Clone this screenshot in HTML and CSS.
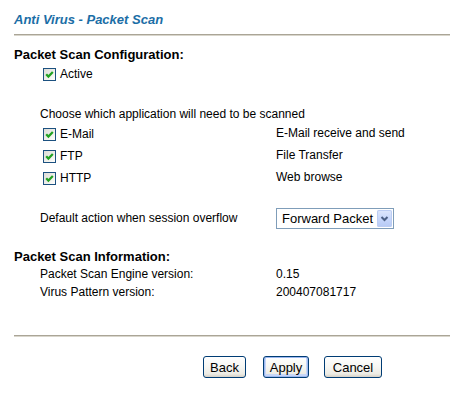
FILE: index.html
```html
<!DOCTYPE html>
<html>
<head>
<meta charset="utf-8">
<link rel="stylesheet" href="styles.css">
</head>
<body>
<div class="page">
  <div class="title">Anti Virus - Packet Scan</div>
  <div class="rule rule-top"></div>

  <div class="heading h-config">Packet Scan Configuration:</div>
  <div class="row row-active">
    <span class="cb"><svg viewBox="0 0 11 11" width="11" height="11"><path d="M2.2 5.2 L4.4 7.6 L8.8 3" fill="none" stroke="#21a121" stroke-width="2.2"/></svg></span>
    <span class="cb-label">Active</span>
  </div>

  <div class="text-line choose">Choose which application will need to be scanned</div>

  <div class="app-row">
    <div class="app-left"><span class="cb"><svg viewBox="0 0 11 11" width="11" height="11"><path d="M2.2 5.2 L4.4 7.6 L8.8 3" fill="none" stroke="#21a121" stroke-width="2.2"/></svg></span><span class="cb-label">E-Mail</span></div>
    <div class="app-desc">E-Mail receive and send</div>
  </div>
  <div class="app-row">
    <div class="app-left"><span class="cb"><svg viewBox="0 0 11 11" width="11" height="11"><path d="M2.2 5.2 L4.4 7.6 L8.8 3" fill="none" stroke="#21a121" stroke-width="2.2"/></svg></span><span class="cb-label">FTP</span></div>
    <div class="app-desc">File Transfer</div>
  </div>
  <div class="app-row">
    <div class="app-left"><span class="cb"><svg viewBox="0 0 11 11" width="11" height="11"><path d="M2.2 5.2 L4.4 7.6 L8.8 3" fill="none" stroke="#21a121" stroke-width="2.2"/></svg></span><span class="cb-label">HTTP</span></div>
    <div class="app-desc">Web browse</div>
  </div>

  <div class="action-row">
    <div class="action-label">Default action when session overflow</div>
    <div class="select">
      <span class="select-text">Forward Packet</span>
      <span class="select-btn"><svg viewBox="0 0 15 17" width="15" height="17"><path d="M4.5 7 L7.5 10 L10.5 7" fill="none" stroke="#4d6185" stroke-width="2"/></svg></span>
    </div>
  </div>

  <div class="heading h-info">Packet Scan Information:</div>
  <div class="info-row">
    <div class="info-label">Packet Scan Engine version:</div>
    <div class="info-value">0.15</div>
  </div>
  <div class="info-row">
    <div class="info-label">Virus Pattern version:</div>
    <div class="info-value">200407081717</div>
  </div>

  <div class="rule rule-bottom"></div>

  <div class="buttons">
    <button class="btn btn-back">Back</button>
    <button class="btn btn-apply">Apply</button>
    <button class="btn btn-cancel">Cancel</button>
  </div>
</div>
</body>
</html>
```

FILE: styles.css
```css
html, body {
  margin: 0;
  padding: 0;
  background: #ffffff;
}
body {
  font-family: "Liberation Sans", Arial, sans-serif;
  font-size: 12px;
  color: #000000;
}
.page {
  padding-left: 14px;
}
.title {
  margin-top: 12px;
  height: 15px;
  line-height: 15px;
  font-size: 13px;
  font-weight: bold;
  font-style: italic;
  color: #1b6ea6;
}
.rule {
  border-top: 1px solid #aaa597;
  background: #d9d6cc;
  height: 1px;
}
.rule-top {
  margin-top: 7px;
}
.heading {
  height: 16px;
  line-height: 16px;
  font-size: 13px;
  font-weight: bold;
}
.h-config {
  margin-top: 11px;
}
.row {
  display: flex;
  align-items: center;
  height: 20px;
}
.row-active {
  margin-top: 1px;
  padding-left: 29px;
}
.cb {
  display: inline-flex;
  width: 11px;
  height: 11px;
  border: 1px solid #1c5180;
  background: linear-gradient(135deg, #dcdcd7 0%, #f4f4f0 70%, #ffffff 100%);
  margin-right: 4px;
  flex: none;
}
.cb svg {
  display: block;
}
.cb-label {
  line-height: 14px;
}
.text-line {
  height: 18px;
  line-height: 18px;
}
.choose {
  margin-top: 21px;
  padding-left: 26px;
}
.app-row {
  display: grid;
  grid-template-columns: 262px auto;
  height: 22px;
  align-items: center;
}
.app-left {
  display: flex;
  align-items: center;
  padding-left: 29px;
}
.app-desc {
  margin-top: -3px;
}
.action-row {
  display: grid;
  grid-template-columns: 262px auto;
  align-items: center;
  margin-top: 19px;
  height: 21px;
}
.action-label {
  padding-left: 26px;
  margin-top: -1px;
}
.select {
  display: flex;
  align-items: center;
  justify-content: space-between;
  width: 116px;
  height: 19px;
  border: 1px solid #7f9db9;
  background: #ffffff;
}
.select-text {
  font-size: 13px;
  padding-left: 5px;
}
.select-btn {
  display: flex;
  width: 15px;
  height: 17px;
  margin-right: 1px;
  border-radius: 2px;
  background: linear-gradient(180deg, #dfe8fc 0%, #c6d6fb 55%, #b6c9f4 100%);
  box-shadow: inset 0 0 0 1px #bccdf3;
}
.select-btn svg {
  display: block;
}
.h-info {
  margin-top: 20px;
}
.info-row {
  display: grid;
  grid-template-columns: 262px auto;
  height: 18px;
  line-height: 18px;
}
.info-label {
  padding-left: 26px;
}
.rule-bottom {
  margin-top: 34px;
}
.buttons {
  display: flex;
  margin-top: 19px;
  padding-left: 189px;
}
.btn {
  height: 22px;
  padding: 0;
  font-family: "Liberation Sans", Arial, sans-serif;
  font-size: 13px;
  color: #000000;
  border: 1px solid #003c74;
  border-radius: 3px;
  background: linear-gradient(180deg, #ffffff 0%, #f6f6f2 50%, #ecebe4 85%, #d6d0c5 100%);
  box-sizing: border-box;
}
.btn-back {
  width: 43px;
}
.btn-apply {
  width: 46px;
  margin-left: 17px;
  box-shadow: inset 0 0 0 1px #9db8f0, inset 0 -1px 0 2px #c7d6f7;
}
.btn-cancel {
  width: 58px;
  margin-left: 15px;
}
```
